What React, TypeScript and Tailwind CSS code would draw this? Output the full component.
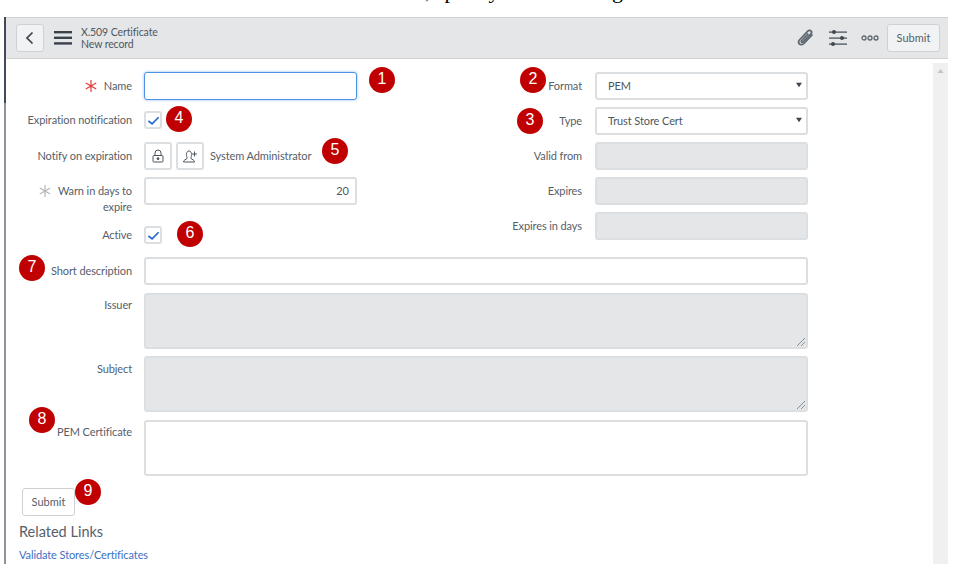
const Badge = ({ n, className }: { n: number; className: string }) => (
  <span className={`absolute flex h-[26px] w-[26px] items-center justify-center rounded-full bg-[#c00000] pb-[2px] font-['Liberation_Sans',sans-serif] text-[16px] leading-none text-white ${className}`}>
    {n}
  </span>
);

const Label = ({ children, className = "" }: { children: React.ReactNode; className?: string }) => (
  <div className={`shrink-0 text-right text-[11px] leading-[16px] tracking-[-0.1px] text-[#56606a] ${className || "w-[126px]"}`}>{children}</div>
);

const Star = ({ color }: { color: string }) => (
  <svg viewBox="0 0 12 12" className="mr-[7px] inline-block h-[12px] w-[12px] align-[-2px]" fill="none" stroke={color} strokeWidth="1.2">
    <path d="M6 0v12M0.8 3 11.200 9M11.200 3 0.800 9" />
  </svg>
);

const field = "rounded-[3px] border-2 border-[#dcdfe2]";
const Check = () => (
  <span className="flex h-[18px] w-[18px] items-center justify-center rounded-[3px] border-2 border-[#dcdfe2] bg-white">
    <svg viewBox="0 0 14 14" className="h-[13px] w-[13px]" fill="none" stroke="#2a6dd0" strokeWidth="1.9">
      <path d="M1.500 7.500 5.500 10.500 12.500 3.500" />
    </svg>
  </span>
);

const Select = ({ value }: { value: string }) => (
  <div className={`${field} flex h-[28px] w-[213px] items-center justify-between bg-white pl-[11px] pr-[2px] text-[11px] tracking-[-0.1px] text-[#4d5760]`}>
    <span>{value}</span>
    <svg viewBox="0 0 8 6" className="mb-[2px] mr-[2px] h-[6px] w-[6px]"><path d="M0 0h8L4 6z" fill="#3f4851" /></svg>
  </div>
);

const ReadOnly = () => <div className={`${field} h-[28px] w-[213px] bg-[#e5e6e8]`} />;

const Grip = () => (
  <svg viewBox="0 0 8 8" className="absolute bottom-[1px] right-[1px] h-2 w-2" stroke="#8a8f94" strokeWidth="1" fill="none">
    <path d="M0 8 8 0M4 8 8 4" />
  </svg>
);

const IconBtn = ({ children }: { children: React.ReactNode }) => (
  <span className="flex h-[28px] w-[28px] items-center justify-center rounded-[3px] border-2 border-[#dcdfe2] bg-white">{children}</span>
);

const RightRow = ({ label, children }: { label: string; children: React.ReactNode }) => (
  <div className="flex items-center gap-[13px]">
    <Label className="w-[105px]">{label}</Label>
    {children}
  </div>
);

export default function App() {
  return (
    <div className="relative h-[564px] w-[953px] overflow-hidden bg-white font-['Lato','Noto_Sans',sans-serif] text-[#56606a]">
      <div className="h-[17px] overflow-hidden pl-[425px] font-['Liberation_Serif',serif] text-[22px] leading-[0px] text-black">
        <div className="-mt-[9px] h-0 whitespace-nowrap">, specify the following</div>
      </div>
      <div className="flex h-[547px] pl-[4px]">
        <div className="flex w-[2px] shrink-0 flex-col">
          <div className="h-[86px] bg-[#3f4b58]" />
          <div className="flex-1 bg-[#8d949b]" />
        </div>
        <div className="flex min-w-0 flex-1 flex-col">
          <header className="mr-[5px] flex h-[42px] shrink-0 items-center border-y border-[#cfd2d5] bg-[#e5e6e8] pl-[10px] pr-[8px]">
            <span className="flex h-[28px] w-[28px] items-center justify-center rounded-[3px] border border-[#cfd2d5] bg-[#f1f2f4]">
              <svg viewBox="0 0 12 14" className="h-[14px] w-[12px]" fill="none" stroke="#3a434c" strokeWidth="1.7"><path d="M8.500 1.500 3 7l5.500 5.500" /></svg>
            </span>
            <svg viewBox="0 0 18 14" className="ml-[10px] h-[14px] w-[18px]" fill="#3a434c"><rect y="0" width="18" height="2.400" /><rect y="5.600" width="18" height="2.400" /><rect y="11.200" width="18" height="2.400" /></svg>
            <div className="ml-[9px] text-[10.500px] leading-[12px] tracking-[-0.1px] text-[#4d5760]">
              <div>X.509 Certificate</div>
              <div>New record</div>
            </div>
            <div className="ml-auto flex items-center">
              <svg viewBox="0 0 20 20" className="h-[20px] w-[20px]" fill="none" stroke="#5d666e" strokeWidth="1.700"><path d="M16.500 6.500 8 15.500c-1.500 1.500-3.600 1.600-4.700.4-1.100-1.200-.9-3 .5-4.400l8-8.300c1-1 2.400-1.100 3.200-.3.8.8.7 2.100-.3 3.100l-7.600 7.900c-.5.5-1.200.6-1.600.2-.4-.4-.3-1.100.2-1.600l6.600-6.800" /></svg>
              <svg viewBox="0 0 18 18" className="ml-[13px] h-[18px] w-[18px]" fill="#3f4851"><rect y="2.500" width="18" height="1.200" /><circle cx="5" cy="3" r="2" /><rect y="8.500" width="18" height="1.200" /><circle cx="13" cy="9" r="2" /><rect y="14.500" width="18" height="1.200" /><circle cx="4" cy="15" r="2" /></svg>
              <svg viewBox="0 0 18 6" className="ml-[14px] h-[6px] w-[18px]" fill="none" stroke="#5d666e" strokeWidth="1.300"><circle cx="3" cy="3" r="2" /><circle cx="9" cy="3" r="2" /><circle cx="15" cy="3" r="2" /></svg>
              <span className="ml-[8px] flex h-[28px] w-[53px] items-center justify-center rounded-[3px] border border-[#cfd2d5] bg-[#f1f2f4] text-[11px] text-[#56606a]">Submit</span>
            </div>
          </header>
          <div className="flex min-h-0 flex-1 pt-[4px]">
            <main className="relative min-w-0 flex-1 pt-[9px]">
              <div className="flex items-start">
                <div className="flex w-[471px] shrink-0 flex-col">
                  <div className="flex h-[28px] items-center gap-[12px]">
                    <Label><Star color="#e03a3a" />Name</Label>
                    <div className="h-[28px] w-[213px] rounded-[3px] border border-[#4f93e6] bg-white shadow-[0_0_3px_#8fbcf0]" />
                  </div>
                  <div className="mt-[11px] flex h-[18px] items-center gap-[12px]">
                    <Label>Expiration notification</Label>
                    <Check />
                  </div>
                  <div className="mt-[13px] flex h-[28px] items-center gap-[12px]">
                    <Label>Notify on expiration</Label>
                    <div className="flex items-center gap-[4px]">
                      <IconBtn>
                        <svg viewBox="0 0 14 14" className="h-[14px] w-[14px]" fill="none" stroke="#4d5760" strokeWidth="1"><rect x="2" y="6.500" width="10" height="6.500" rx="1" /><path d="M4 6.500V4a3 3 0 0 1 6 0v2.500" /><circle cx="7" cy="9.700" r="1" fill="#4d5760" /></svg>
                      </IconBtn>
                      <IconBtn>
                        <svg viewBox="0 0 16 14" className="h-[14px] w-[16px]" fill="none" stroke="#4d5760" strokeWidth="1"><path d="M1.500 13h11c0-2-2.500-2.500-3.500-3.500V8c1-1 1-6-2-6S4 7 5 8v1.500C4 10.500 1.500 11 1.500 13zM10 5h5M12.500 2.500v5" /></svg>
                      </IconBtn>
                      <span className="ml-[2px] text-[11px] tracking-[-0.1px] text-[#56606a]">System Administrator</span>
                    </div>
                  </div>
                  <div className="mt-[7px] flex items-start gap-[12px]">
                    <Label className="w-[126px] pt-[6px]"><Star color="#b4b8bc" />Warn in days to<br />expire</Label>
                    <div className={`${field} flex h-[28px] w-[213px] items-center justify-end bg-white pr-[6px] text-[11px] text-[#4d5760]`}>20</div>
                  </div>
                </div>
                <div className="flex flex-col gap-[7px]">
                  <RightRow label="Format"><Select value="PEM" /></RightRow>
                  <RightRow label="Type"><Select value="Trust Store Cert" /></RightRow>
                  <RightRow label="Valid from"><ReadOnly /></RightRow>
                  <RightRow label="Expires"><ReadOnly /></RightRow>
                  <RightRow label="Expires in days"><ReadOnly /></RightRow>
                </div>
              </div>
              <div className="-mt-[14px] flex h-[18px] items-center gap-[12px]">
                <Label>Active</Label>
                <Check />
              </div>
              <div className="mt-[13px] flex h-[28px] items-center gap-[12px]">
                <Label>Short description</Label>
                <div className={`${field} h-[28px] w-[664px] bg-white`} />
              </div>
              <div className="mt-[8px] flex items-start gap-[12px]">
                <Label className="w-[126px] pt-[4px]">Issuer</Label>
                <div className={`${field} relative h-[56px] w-[664px] bg-[#e5e6e8]`}><Grip /></div>
              </div>
              <div className="mt-[7px] flex items-start gap-[12px]">
                <Label className="w-[126px] pt-[5px]">Subject</Label>
                <div className={`${field} relative h-[56px] w-[664px] bg-[#e5e6e8]`}><Grip /></div>
              </div>
              <div className="mt-[8px] flex items-start gap-[12px]">
                <Label className="w-[126px] pt-[4px]">PEM Certificate</Label>
                <div className={`${field} h-[56px] w-[664px] bg-white`} />
              </div>
              <div className="ml-[16px] mt-[12px] flex h-[28px] w-[53px] items-center justify-center rounded-[3px] border border-[#cfd2d5] bg-white text-[11px] text-[#56606a]">Submit</div>
              <div className="ml-[13px] mt-[6px] text-[14.500px] leading-[20px] text-[#56606a]">Related Links</div>
              <div className="ml-[13px] mt-[5px] text-[11px] leading-[15px] tracking-[-0.1px] text-[#3c6fc4]">Validate Stores/Certificates</div>

              <Badge n={1} className="left-[363px] top-[4px]" />
              <Badge n={4} className="left-[160px] top-[43px]" />
              <Badge n={5} className="left-[316px] top-[75px]" />
              <Badge n={6} className="left-[171px] top-[158px]" />
              <Badge n={7} className="left-[13px] top-[192px]" />
              <Badge n={8} className="left-[23px] top-[344px]" />
              <Badge n={9} className="left-[69px] top-[416px]" />
              <Badge n={2} className="left-[514px] top-[4px]" />
              <Badge n={3} className="left-[511px] top-[45px]" />
            </main>
            <aside className="mr-[5px] w-[15px] shrink-0 bg-[#f0f0f0] pt-[6px]">
              <svg viewBox="0 0 8 5" className="mx-auto h-[4px] w-[7px]"><path d="M4 0 8 5H0z" fill="#c4c4c4" /></svg>
            </aside>
          </div>
        </div>
      </div>
    </div>
  );
}
